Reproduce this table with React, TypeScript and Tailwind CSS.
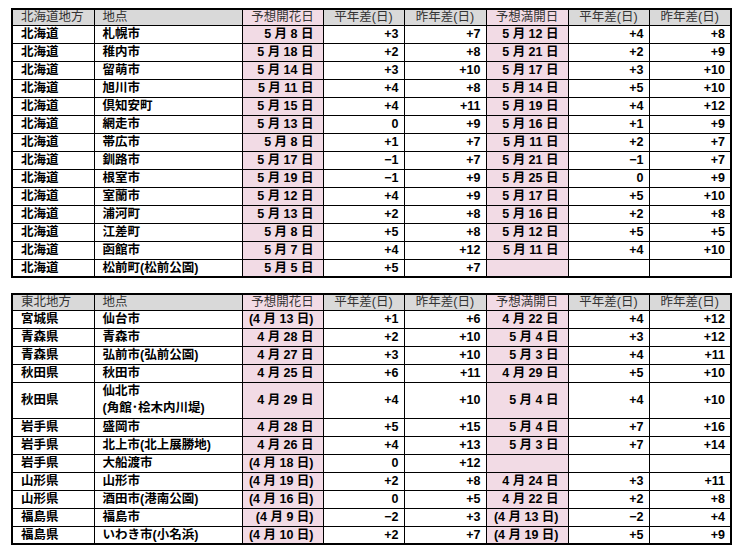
import React from "react";

type Row = string[];

const hokkaido: Row[] = [
  ["北海道", "札幌市", "5 月 8 日", "+3", "+7", "5 月 12 日", "+4", "+8"],
  ["北海道", "稚内市", "5 月 18 日", "+2", "+8", "5 月 21 日", "+2", "+9"],
  ["北海道", "留萌市", "5 月 14 日", "+3", "+10", "5 月 17 日", "+3", "+10"],
  ["北海道", "旭川市", "5 月 11 日", "+4", "+8", "5 月 14 日", "+5", "+10"],
  ["北海道", "倶知安町", "5 月 15 日", "+4", "+11", "5 月 19 日", "+4", "+12"],
  ["北海道", "網走市", "5 月 13 日", "0", "+9", "5 月 16 日", "+1", "+9"],
  ["北海道", "帯広市", "5 月 8 日", "+1", "+7", "5 月 11 日", "+2", "+7"],
  ["北海道", "釧路市", "5 月 17 日", "−1", "+7", "5 月 21 日", "−1", "+7"],
  ["北海道", "根室市", "5 月 19 日", "−1", "+9", "5 月 25 日", "0", "+9"],
  ["北海道", "室蘭市", "5 月 12 日", "+4", "+9", "5 月 17 日", "+5", "+10"],
  ["北海道", "浦河町", "5 月 13 日", "+2", "+8", "5 月 16 日", "+2", "+8"],
  ["北海道", "江差町", "5 月 8 日", "+5", "+8", "5 月 12 日", "+5", "+5"],
  ["北海道", "函館市", "5 月 7 日", "+4", "+12", "5 月 11 日", "+4", "+10"],
  ["北海道", "松前町(松前公園)", "5 月 5 日", "+5", "+7", "", "", ""],
];

const tohoku: Row[] = [
  ["宮城県", "仙台市", "(4 月 13 日)", "+1", "+6", "4 月 22 日", "+4", "+12"],
  ["青森県", "青森市", "4 月 28 日", "+2", "+10", "5 月 4 日", "+3", "+12"],
  ["青森県", "弘前市(弘前公園)", "4 月 27 日", "+3", "+10", "5 月 3 日", "+4", "+11"],
  ["秋田県", "秋田市", "4 月 25 日", "+6", "+11", "4 月 29 日", "+5", "+10"],
  ["秋田県", "仙北市\n(角館･桧木内川堤)", "4 月 29 日", "+4", "+10", "5 月 4 日", "+4", "+10"],
  ["岩手県", "盛岡市", "4 月 28 日", "+5", "+15", "5 月 4 日", "+7", "+16"],
  ["岩手県", "北上市(北上展勝地)", "4 月 26 日", "+4", "+13", "5 月 3 日", "+7", "+14"],
  ["岩手県", "大船渡市", "(4 月 18 日)", "0", "+12", "", "", ""],
  ["山形県", "山形市", "(4 月 19 日)", "+2", "+8", "4 月 24 日", "+3", "+11"],
  ["山形県", "酒田市(港南公園)", "(4 月 16 日)", "0", "+5", "4 月 22 日", "+2", "+8"],
  ["福島県", "福島市", "(4 月 9 日)", "−2", "+3", "(4 月 13 日)", "−2", "+4"],
  ["福島県", "いわき市(小名浜)", "(4 月 10 日)", "+2", "+7", "(4 月 19 日)", "+5", "+9"],
];

const widths = [82, 148, 81, 81, 82, 82, 81, 82];

const SakuraTable = ({ region, rows }: { region: string; rows: Row[] }) => {
  const heads = [region, "地点", "予想開花日", "平年差(日)", "昨年差(日)", "予想満開日", "平年差(日)", "昨年差(日)"];
  return (
    <table className="table-fixed border-collapse border-2 border-black w-[719px] text-[12.5px] leading-none">
      <colgroup>
        {widths.map((w, i) => (
          <col key={i} style={{ width: w }} />
        ))}
      </colgroup>
      <thead>
        <tr className="h-[16px] bg-[#d9d9d9] text-[#333]">
          {heads.map((h, i) => (
            <th
              key={i}
              className={
                "border border-black font-normal px-[8px] " +
                (i < 2 ? "text-left " : "text-center ") +
                (i === 2 || i === 5 ? "bg-[#f2dbe5]" : "")
              }
            >
              {h}
            </th>
          ))}
        </tr>
      </thead>
      <tbody>
        {rows.map((r, ri) => {
          const tall = r[1].includes("\n");
          return (
            <tr key={ri} className={tall ? "h-[36px]" : "h-[18px]"}>
              {r.map((c, ci) => {
                let cls = "border border-black font-bold text-black ";
                if (ci < 2) cls += "text-left px-[8px] ";
                else if (ci === 2 || ci === 5) cls += "text-right pr-[9px] bg-[#f2dbe5] ";
                else cls += "text-right pr-[5px] ";
                return (
                  <td key={ci} className={cls}>
                    {c.split("\n").map((line, li) => (
                      <div key={li} className={tall && ci === 1 ? "leading-[17px]" : ""}>
                        {line}
                      </div>
                    ))}
                  </td>
                );
              })}
            </tr>
          );
        })}
      </tbody>
    </table>
  );
};

export default function App() {
  return (
    <div
      className="bg-white w-[738px] h-[551px] pl-[11px] pt-[8px] flex flex-col gap-[15px]"
      style={{ fontFamily: '"Liberation Sans", "Noto Sans CJK JP", sans-serif' }}
    >
      <SakuraTable region="北海道地方" rows={hokkaido} />
      <SakuraTable region="東北地方" rows={tohoku} />
    </div>
  );
}
